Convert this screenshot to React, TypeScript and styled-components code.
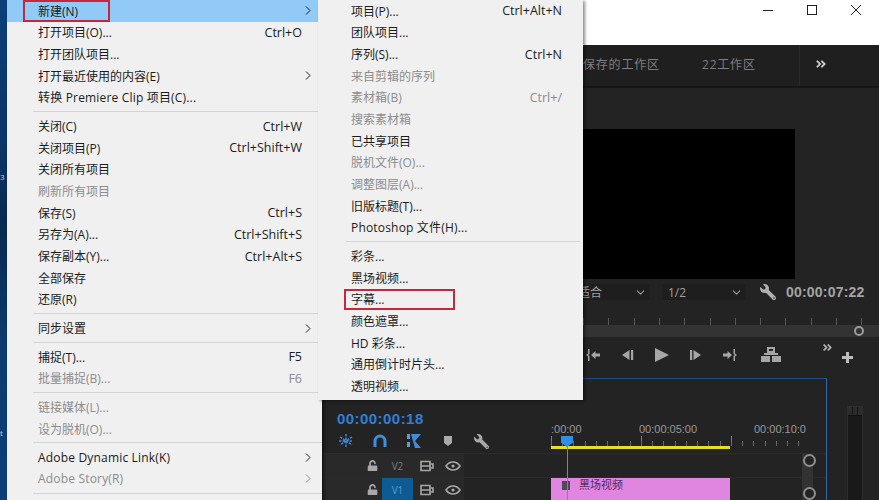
import React from 'react';
import styled, { createGlobalStyle } from 'styled-components';
import { ChevronDown } from 'lucide-react';
import { FaAngleDoubleRight, FaUnlock, FaWrench } from 'react-icons/fa';

const GlobalStyle = createGlobalStyle`
  html, body {
    margin: 0;
    padding: 0;
    background: #232323;
  }
  * {
    box-sizing: border-box;
  }
`;

const UI_FONT = `"Open Sans", "Noto Sans CJK SC", sans-serif`;

type MenuEntry =
  | { sep: true }
  | {
      label: string;
      keys?: string;
      off?: boolean;
      sub?: boolean;
      active?: boolean;
      latin?: boolean;
      mark?: [number, number];
    };

const mainMenu: MenuEntry[] = [
  { label: '新建(N)', sub: true, active: true, mark: [16, 87] },
  { label: '打开项目(O)...', keys: 'Ctrl+O' },
  { label: '打开团队项目...' },
  { label: '打开最近使用的内容(E)', sub: true },
  { label: '转换 Premiere Clip 项目(C)...', latin: true },
  { sep: true },
  { label: '关闭(C)', keys: 'Ctrl+W' },
  { label: '关闭项目(P)', keys: 'Ctrl+Shift+W' },
  { label: '关闭所有项目' },
  { label: '刷新所有项目', off: true },
  { label: '保存(S)', keys: 'Ctrl+S' },
  { label: '另存为(A)...', keys: 'Ctrl+Shift+S' },
  { label: '保存副本(Y)...', keys: 'Ctrl+Alt+S' },
  { label: '全部保存' },
  { label: '还原(R)' },
  { sep: true },
  { label: '同步设置', sub: true },
  { sep: true },
  { label: '捕捉(T)...', keys: 'F5' },
  { label: '批量捕捉(B)...', keys: 'F6', off: true },
  { sep: true },
  { label: '链接媒体(L)...', off: true },
  { label: '设为脱机(O)...', off: true },
  { sep: true },
  { label: 'Adobe Dynamic Link(K)', sub: true, latin: true },
  { label: 'Adobe Story(R)', sub: true, off: true, latin: true },
  { sep: true },
];

const newMenu: MenuEntry[] = [
  { label: '项目(P)...', keys: 'Ctrl+Alt+N' },
  { label: '团队项目...' },
  { label: '序列(S)...', keys: 'Ctrl+N' },
  { label: '来自剪辑的序列', off: true },
  { label: '素材箱(B)', keys: 'Ctrl+/', off: true },
  { label: '搜索素材箱', off: true },
  { label: '已共享项目' },
  { label: '脱机文件(O)...', off: true },
  { label: '调整图层(A)...', off: true },
  { label: '旧版标题(T)...' },
  { label: 'Photoshop 文件(H)...', latin: true },
  { sep: true },
  { label: '彩条...' },
  { label: '黑场视频...' },
  { label: '字幕...', mark: [26, 111] },
  { label: '颜色遮罩...' },
  { label: 'HD 彩条...' },
  { label: '通用倒计时片头...' },
  { label: '透明视频...' },
];

const Root = styled.div`
  position: relative;
  display: flex;
  width: 879px;
  height: 500px;
  overflow: hidden;
  background: #232323;
  font-family: ${UI_FONT};
`;

const DesktopStrip = styled.div`
  flex: 0 0 7px;
  display: flex;
  flex-direction: column;
  padding-top: 171px;
  gap: 244px;
  background: linear-gradient(180deg, #0b3f78 0%, #0a3566 30%, #072a50 44%, #0b3c70 70%, #0b3f78 100%);
`;

const DesktopLabel = styled.span`
  color: #c8d4e0;
  font-size: 8px;
  line-height: 12px;
`;

const AppWindow = styled.div`
  flex: 1;
  display: flex;
  flex-direction: column;
  min-width: 0;
`;

const TitleBar = styled.div`
  flex: 0 0 45px;
  display: flex;
  justify-content: flex-end;
  align-items: flex-start;
  padding: 3px 16px 0 0;
  gap: 30px;
  background: #ffffff;
`;

const WindowButton = styled.svg`
  width: 14px;
  height: 14px;
  fill: none;
  stroke: #222;
  stroke-width: 1;
`;

const TabBar = styled.div`
  flex: 0 0 43px;
  display: flex;
  align-items: center;
  padding-left: 576px;
  background: #1f1f1f;
  border-bottom: 2px solid #161616;
  color: #7f7f7f;
  font-size: 12px;
`;

const Tab = styled.span<{ $w: number }>`
  width: ${(p) => p.$w}px;
  padding-bottom: 3px;
  letter-spacing: 0.8px;
  white-space: nowrap;
`;

const TabOverflow = styled.span`
  display: flex;
  align-items: center;
  align-self: stretch;
  width: 40px;
  padding: 0 0 4px 15px;
  border-left: 1px solid #2b2b2b;
  color: #c8c8c8;
  font-size: 12px;
`;

const Workspace = styled.div`
  flex: 1;
  display: flex;
  flex-direction: column;
  min-height: 0;
`;

const ProgramPanel = styled.section`
  flex: 0 0 290px;
  display: flex;
  flex-direction: column;
  margin-left: 521px;
  padding-top: 41px;
  background: #232323;
`;

const VideoFrame = styled.div`
  width: 235px;
  height: 150px;
  margin-left: 32px;
  background: #000;
`;

const ViewControls = styled.div`
  display: flex;
  align-items: center;
  height: 26px;
  padding-left: 32px;
  color: #a5a5a5;
  font-size: 12px;
`;

const Dropdown = styled.div<{ $w: number; $pad: number }>`
  display: flex;
  align-items: center;
  justify-content: space-between;
  width: ${(p) => p.$w}px;
  height: 16px;
  margin-right: 12px;
  padding: 0 3px 0 ${(p) => p.$pad}px;
  background: #1e1e1e;
  color: #a0a0a0;
  svg {
    width: 13px;
    height: 13px;
    color: #9a9a9a;
  }
`;

const WrenchIcon = styled(FaWrench)<{ $size: number; $color: string }>`
  flex: none;
  width: ${(p) => p.$size}px;
  height: ${(p) => p.$size}px;
  color: ${(p) => p.$color};
  transform: scaleX(-1);
`;

const ViewWrench = styled(WrenchIcon)`
  margin-left: 2px;
`;

const ProgramTime = styled.span`
  margin-left: 10px;
  color: #a4a4a4;
  font-family: "Liberation Sans", sans-serif;
  font-size: 14px;
  font-weight: 700;
  letter-spacing: 0.2px;
`;

const MonitorRuler = styled.div`
  height: 10px;
  margin: 10px 14px 0 55px;
  background: repeating-linear-gradient(90deg, #585858 0 1px, transparent 1px 25.3px) 0 3px / 100% 7px no-repeat;
`;

const ScrubBar = styled.div`
  position: relative;
  height: 12px;
  margin-left: 55px;
  background: #333333;
`;

const ScrubHandle = styled.span`
  position: absolute;
  right: 15px;
  top: 1px;
  width: 10px;
  height: 10px;
  border: 2px solid #9c9c9c;
  border-radius: 50%;
`;

const Transport = styled.div`
  display: flex;
  align-items: center;
  height: 36px;
  padding-left: 57px;
`;

const TransportButton = styled.svg<{ $gap: number; $w?: number; $h?: number }>`
  flex: none;
  width: ${(p) => p.$w ?? 16}px;
  height: ${(p) => p.$h ?? 14}px;
  margin-right: ${(p) => p.$gap}px;
  fill: #a6a6a6;
`;

const TransportExtra = styled.span`
  display: flex;
  align-items: flex-start;
  gap: 9px;
  margin-left: 18px;
  color: #b4b4b4;
  font-size: 11px;
  svg:first-child {
    margin-top: -5px;
  }
  svg:last-child {
    margin-top: 5px;
  }
`;

const LowerRow = styled.div`
  flex: 1;
  display: flex;
  min-height: 0;
  padding-left: 316px;
`;

const TimelinePanel = styled.section`
  position: relative;
  flex: 0 0 504px;
  display: flex;
  flex-direction: column;
  background: #232323;
  border-top: 1px solid #1d4f86;
  border-right: 1px solid #2f6aa6;
`;

const TimelineHead = styled.div`
  flex: 0 0 75px;
  display: flex;
  border-bottom: 1px solid #2c2c2c;
`;

const HeadControls = styled.div`
  flex: 0 0 228px;
  padding: 31px 0 0 14px;
`;

const SequenceTime = styled.div`
  color: #2f7fd8;
  font-family: "Liberation Sans", sans-serif;
  font-size: 15px;
  font-weight: 700;
  line-height: 17px;
  letter-spacing: 0.45px;
`;

const ToolRow = styled.div`
  display: flex;
  align-items: center;
  gap: 18px;
  margin: 5px 0 0 1px;
  height: 18px;
`;

const ToolIcon = styled.svg`
  flex: none;
  width: 16px;
  height: 16px;
`;

const Ruler = styled.div`
  flex: 1;
  padding-top: 43px;
  overflow: hidden;
`;

const RulerLabels = styled.div`
  display: flex;
  color: #9a9a9a;
  font-family: "Liberation Sans", sans-serif;
  font-size: 11px;
  line-height: 14px;
  white-space: nowrap;
`;

const RulerLabel = styled.span<{ $w: number }>`
  flex: 0 0 ${(p) => p.$w}px;
`;

const RulerTicks = styled.div`
  height: 10px;
  margin-right: 23px;
  background:
    repeating-linear-gradient(90deg, #6a6a6a 0 1px, transparent 1px 11.25px) 0 5px / 100% 5px no-repeat,
    repeating-linear-gradient(90deg, #7c7c7c 0 1px, transparent 1px 90px) 0 0 / 100% 10px no-repeat;
`;

const WorkArea = styled.div`
  width: 179px;
  height: 3px;
  background: #e8df20;
`;

const TrackRow = styled.div<{ $h: number }>`
  flex: 0 0 ${(p) => p.$h}px;
  display: flex;
  border-bottom: 1px solid #2b2b2b;
`;

const TrackHeader = styled.div`
  flex: 0 0 228px;
  display: flex;
  align-items: center;
`;

const TrackControls = styled.div`
  display: flex;
  align-items: center;
  align-self: stretch;
  width: 141px;
  padding-left: 44px;
  background: #292929;
  svg {
    flex: none;
  }
`;

const LockIcon = styled(FaUnlock)`
  width: 11px;
  height: 11px;
  color: #a8a8a8;
`;

const TrackTarget = styled.span<{ $on?: boolean }>`
  display: flex;
  align-items: center;
  justify-content: center;
  align-self: stretch;
  width: 31px;
  margin: 0 7px 0 4px;
  background: ${(p) => (p.$on ? '#0e5a92' : 'transparent')};
  color: ${(p) => (p.$on ? '#5a9ccc' : '#7c7c7c')};
  font-size: 10px;
`;

const TrackIcon = styled.svg<{ $w: number; $mr: number }>`
  width: ${(p) => p.$w}px;
  height: 12px;
  margin-right: ${(p) => p.$mr}px;
  fill: none;
  stroke: #a8a8a8;
  stroke-width: 1.6;
`;

const Clip = styled.div`
  display: flex;
  align-items: flex-start;
  gap: 9px;
  width: 179px;
  height: 100%;
  padding: 0 0 0 11px;
  background: #e085e0;
  color: #552b63;
  font-size: 11px;
  line-height: 14px;
`;

const ClipThumb = styled.span`
  flex: none;
  width: 8px;
  height: 9px;
  margin-top: 3px;
  background: #4c4c58;
`;

const Playhead = styled.div`
  position: absolute;
  left: 238px;
  top: 57px;
  bottom: 0;
  width: 12px;
  pointer-events: none;
  &::before {
    content: '';
    display: block;
    width: 12px;
    height: 11px;
    background: #2f8fe8;
    clip-path: polygon(0 0, 100% 0, 100% 60%, 50% 100%, 0 60%);
  }
  &::after {
    content: '';
    position: absolute;
    left: 5.5px;
    top: 10px;
    bottom: 0;
    width: 1px;
    background: #3a96ee;
  }
`;

const VerticalScroll = styled.div`
  position: absolute;
  right: 13px;
  top: 75px;
  bottom: 0;
  width: 11px;
  background: #323232;
  &::before,
  &::after {
    content: '';
    position: absolute;
    left: 1px;
    width: 9px;
    height: 9px;
    border: 2px solid #8e8e8e;
    border-radius: 50%;
    background: #232323;
  }
  &::before {
    top: 0;
  }
  &::after {
    bottom: 0;
  }
`;

const MeterColumn = styled.aside`
  flex: 1;
  padding: 28px 16px 0 20px;
`;

const Meter = styled.div`
  height: 100%;
  background: #191919;
  border: 1px solid #2e2e2e;
  border-bottom: 0;
`;

const MeterCap = styled.div`
  height: 9px;
  border-bottom: 1px solid #111;
  background: repeating-linear-gradient(90deg, #2c2c2c 0 4px, #151515 4px 5px);
`;

const MenuPanel = styled.nav<{ $left: number; $width: number; $height: number; $z: number }>`
  position: absolute;
  top: 0;
  left: ${(p) => p.$left}px;
  width: ${(p) => p.$width}px;
  height: ${(p) => p.$height}px;
  z-index: ${(p) => p.$z};
  background: #f0f0f0;
  box-shadow: 2px 1px 3px rgba(0, 0, 0, 0.45);
`;

const MenuRow = styled.div<{ $off?: boolean; $active?: boolean; $inset: number; $end: number }>`
  position: relative;
  display: grid;
  grid-template-columns: 1fr auto 12px;
  align-items: center;
  height: 21.67px;
  padding: 0 ${(p) => p.$end}px 0 ${(p) => p.$inset}px;
  background: ${(p) => (p.$active ? '#91c9f7' : 'transparent')};
  color: ${(p) => (p.$off ? '#8c8c8c' : '#1b1b1b')};
  font-size: 12px;
  white-space: nowrap;
`;

const MenuLabel = styled.span<{ $latin?: boolean }>`
  letter-spacing: ${(p) => (p.$latin ? '0.18px' : 'normal')};
`;

const MenuKeys = styled.span`
  font-size: 12.5px;
`;

const MenuArrow = styled.svg`
  justify-self: center;
  width: 6px;
  height: 9px;
  fill: none;
  stroke: currentColor;
  stroke-width: 1;
`;

const MenuSeparator = styled.div<{ $inset: number; $end: number }>`
  height: 7px;
  margin: 0 ${(p) => p.$end}px 0 ${(p) => p.$inset}px;
  background: linear-gradient(#d4d4d4, #d4d4d4) 0 3px / 100% 1px no-repeat;
`;

const Callout = styled.span<{ $left: number; $width: number }>`
  position: absolute;
  top: 0;
  bottom: 0;
  left: ${(p) => p.$left}px;
  width: ${(p) => p.$width}px;
  border: 2px solid #c4283e;
`;

const Menu: React.FC<{
  items: MenuEntry[];
  left: number;
  width: number;
  height: number;
  z: number;
  inset: number;
  end: number;
  sepInset: number;
  sepEnd: number;
}> = ({ items, left, width, height, z, inset, end, sepInset, sepEnd }) => (
  <MenuPanel $left={left} $width={width} $height={height} $z={z}>
    {items.map((item, i) =>
      'sep' in item ? (
        <MenuSeparator key={i} $inset={sepInset} $end={sepEnd} />
      ) : (
        <MenuRow key={i} $off={item.off} $active={item.active} $inset={inset} $end={end}>
          <MenuLabel $latin={item.latin}>{item.label}</MenuLabel>
          <MenuKeys>{item.keys}</MenuKeys>
          {item.sub ? (
            <MenuArrow viewBox="0 0 6 9">
              <path d="M1 .5 5 4.5 1 8.5" />
            </MenuArrow>
          ) : (
            <span />
          )}
          {item.mark && <Callout $left={item.mark[0]} $width={item.mark[1]} />}
        </MenuRow>
      ),
    )}
  </MenuPanel>
);

const EyeGlyph = () => (
  <TrackIcon $w={16} $mr={0} viewBox="0 0 16 12">
    <path d="M1 6c2-3 4.500-4 7-4s5 1 7 4c-2 3-4.500 4-7 4S3 9 1 6Z" />
    <circle cx="8" cy="6" r="1.600" fill="#a8a8a8" stroke="none" />
  </TrackIcon>
);

const FilmGlyph = () => (
  <TrackIcon $w={14} $mr={11} viewBox="0 0 14 12">
    <path d="M1 1.500h9v9H1zM1 6h9M10 4h3v4h-3" />
  </TrackIcon>
);

const App: React.FC = () => (
  <>
    <GlobalStyle />
    <Root>
      <DesktopStrip>
        <DesktopLabel>3</DesktopLabel>
        <DesktopLabel>t</DesktopLabel>
      </DesktopStrip>
      <AppWindow>
        <TitleBar>
          <WindowButton viewBox="0 0 14 14">
            <path d="M2 7.500h10" />
          </WindowButton>
          <WindowButton viewBox="0 0 14 14">
            <rect x="2.500" y="2.500" width="9" height="9" />
          </WindowButton>
          <WindowButton viewBox="0 0 14 14">
            <path d="M2 2l10 10M12 2 2 12" />
          </WindowButton>
        </TitleBar>
        <TabBar>
          <Tab $w={119}>保存的工作区</Tab>
          <Tab $w={97}>22工作区</Tab>
          <TabOverflow>
            <FaAngleDoubleRight />
          </TabOverflow>
        </TabBar>
        <Workspace>
          <ProgramPanel>
            <VideoFrame />
            <ViewControls>
              <Dropdown $w={90} $pad={18}>
                适合
                <ChevronDown />
              </Dropdown>
              <Dropdown $w={84} $pad={6}>
                1/2
                <ChevronDown />
              </Dropdown>
              <ViewWrench $size={16} $color="#b0b0b0" />
              <ProgramTime>00:00:07:22</ProgramTime>
            </ViewControls>
            <MonitorRuler />
            <ScrubBar>
              <ScrubHandle />
            </ScrubBar>
            <Transport>
              <TransportButton $gap={18} viewBox="0 0 16 14">
                <path d="M3 1h1.500v5L3 7l1.500 1v5H3V8.500L1 7l2-1.500zM6 7l4.500-4v2.500H15v3h-4.500V11z" />
              </TransportButton>
              <TransportButton $gap={18} viewBox="0 0 16 14">
                <path d="M10.500 2v10L3 7zM12 2h2.200v10H12z" />
              </TransportButton>
              <TransportButton $gap={19} viewBox="0 0 16 14">
                <path d="M2 0l14 7-14 7z" />
              </TransportButton>
              <TransportButton $gap={18} viewBox="0 0 16 14">
                <path d="M2 2h2.200v10H2zM5.500 2v10L13 7z" />
              </TransportButton>
              <TransportButton $gap={23} viewBox="0 0 16 14">
                <path d="M13 1h-1.500v5L13 7l-1.500 1v5H13V8.500L15 7l-2-1.500zM10 7 5.500 3v2.500H1v3h4.500V11z" />
              </TransportButton>
              <TransportButton $gap={23} $w={20} $h={16} viewBox="0 0 20 16">
                <path d="M6 0h8v6h3v2H3V6h3zM8 2v2h4V2zM0 9h9v6H0zM11 9h9v6h-9z" />
              </TransportButton>
              <TransportExtra>
                <FaAngleDoubleRight />
                <svg width="11" height="11" viewBox="0 0 11 11" fill="#bdbdbd">
                  <path d="M4 0h3v4h4v3H7v4H4V7H0V4h4z" />
                </svg>
              </TransportExtra>
            </Transport>
          </ProgramPanel>
          <LowerRow>
            <TimelinePanel>
              <TimelineHead>
                <HeadControls>
                  <SequenceTime>00:00:00:18</SequenceTime>
                  <ToolRow>
                    <ToolIcon viewBox="0 0 16 16" fill="none" stroke="#3f87d6" strokeWidth="1.500">
                      <path d="M8 1v14M2 4l12 8M14 4 2 12M1 8h14" strokeDasharray="2.500 1" />
                    </ToolIcon>
                    <ToolIcon viewBox="0 0 16 16" fill="none" stroke="#3f8de0" strokeWidth="3">
                      <path d="M3 14V8a5 5 0 0 1 10 0v6" />
                    </ToolIcon>
                    <ToolIcon viewBox="0 0 16 16">
                      <path d="M5 1h10L9 8l6 7H9z" fill="#3f8de0" />
                      <path d="M1 1h3v5H1zM1 9h3v5H1z" fill="#5b9be0" />
                    </ToolIcon>
                    <ToolIcon viewBox="0 0 16 16" fill="#a8a8a8">
                      <path d="M4 3h8v7l-4 3-4-3z" />
                    </ToolIcon>
                    <WrenchIcon $size={15} $color="#a8a8a8" />
                  </ToolRow>
                </HeadControls>
                <Ruler>
                  <RulerLabels>
                    <RulerLabel $w={88}>:00:00</RulerLabel>
                    <RulerLabel $w={115}>00:00:05:00</RulerLabel>
                    <RulerLabel $w={60}>00:00:10:0</RulerLabel>
                  </RulerLabels>
                  <RulerTicks />
                  <WorkArea />
                </Ruler>
              </TimelineHead>
              <TrackRow $h={24}>
                <TrackHeader>
                  <TrackControls>
                    <LockIcon />
                    <TrackTarget>V2</TrackTarget>
                    <FilmGlyph />
                    <EyeGlyph />
                  </TrackControls>
                </TrackHeader>
              </TrackRow>
              <TrackRow $h={24}>
                <TrackHeader>
                  <TrackControls>
                    <LockIcon />
                    <TrackTarget $on>V1</TrackTarget>
                    <FilmGlyph />
                    <EyeGlyph />
                  </TrackControls>
                </TrackHeader>
                <Clip>
                  <ClipThumb />
                  黑场视频
                </Clip>
              </TrackRow>
              <Playhead />
              <VerticalScroll />
            </TimelinePanel>
            <MeterColumn>
              <Meter>
                <MeterCap />
              </Meter>
            </MeterColumn>
          </LowerRow>
        </Workspace>
      </AppWindow>
      <Menu items={mainMenu} left={7} width={315} height={500} z={1} inset={31} end={8} sepInset={26} sepEnd={0} />
      <Menu items={newMenu} left={318} width={265} height={400} z={2} inset={33} end={9} sepInset={28} sepEnd={3} />
    </Root>
  </>
);

export default App;
